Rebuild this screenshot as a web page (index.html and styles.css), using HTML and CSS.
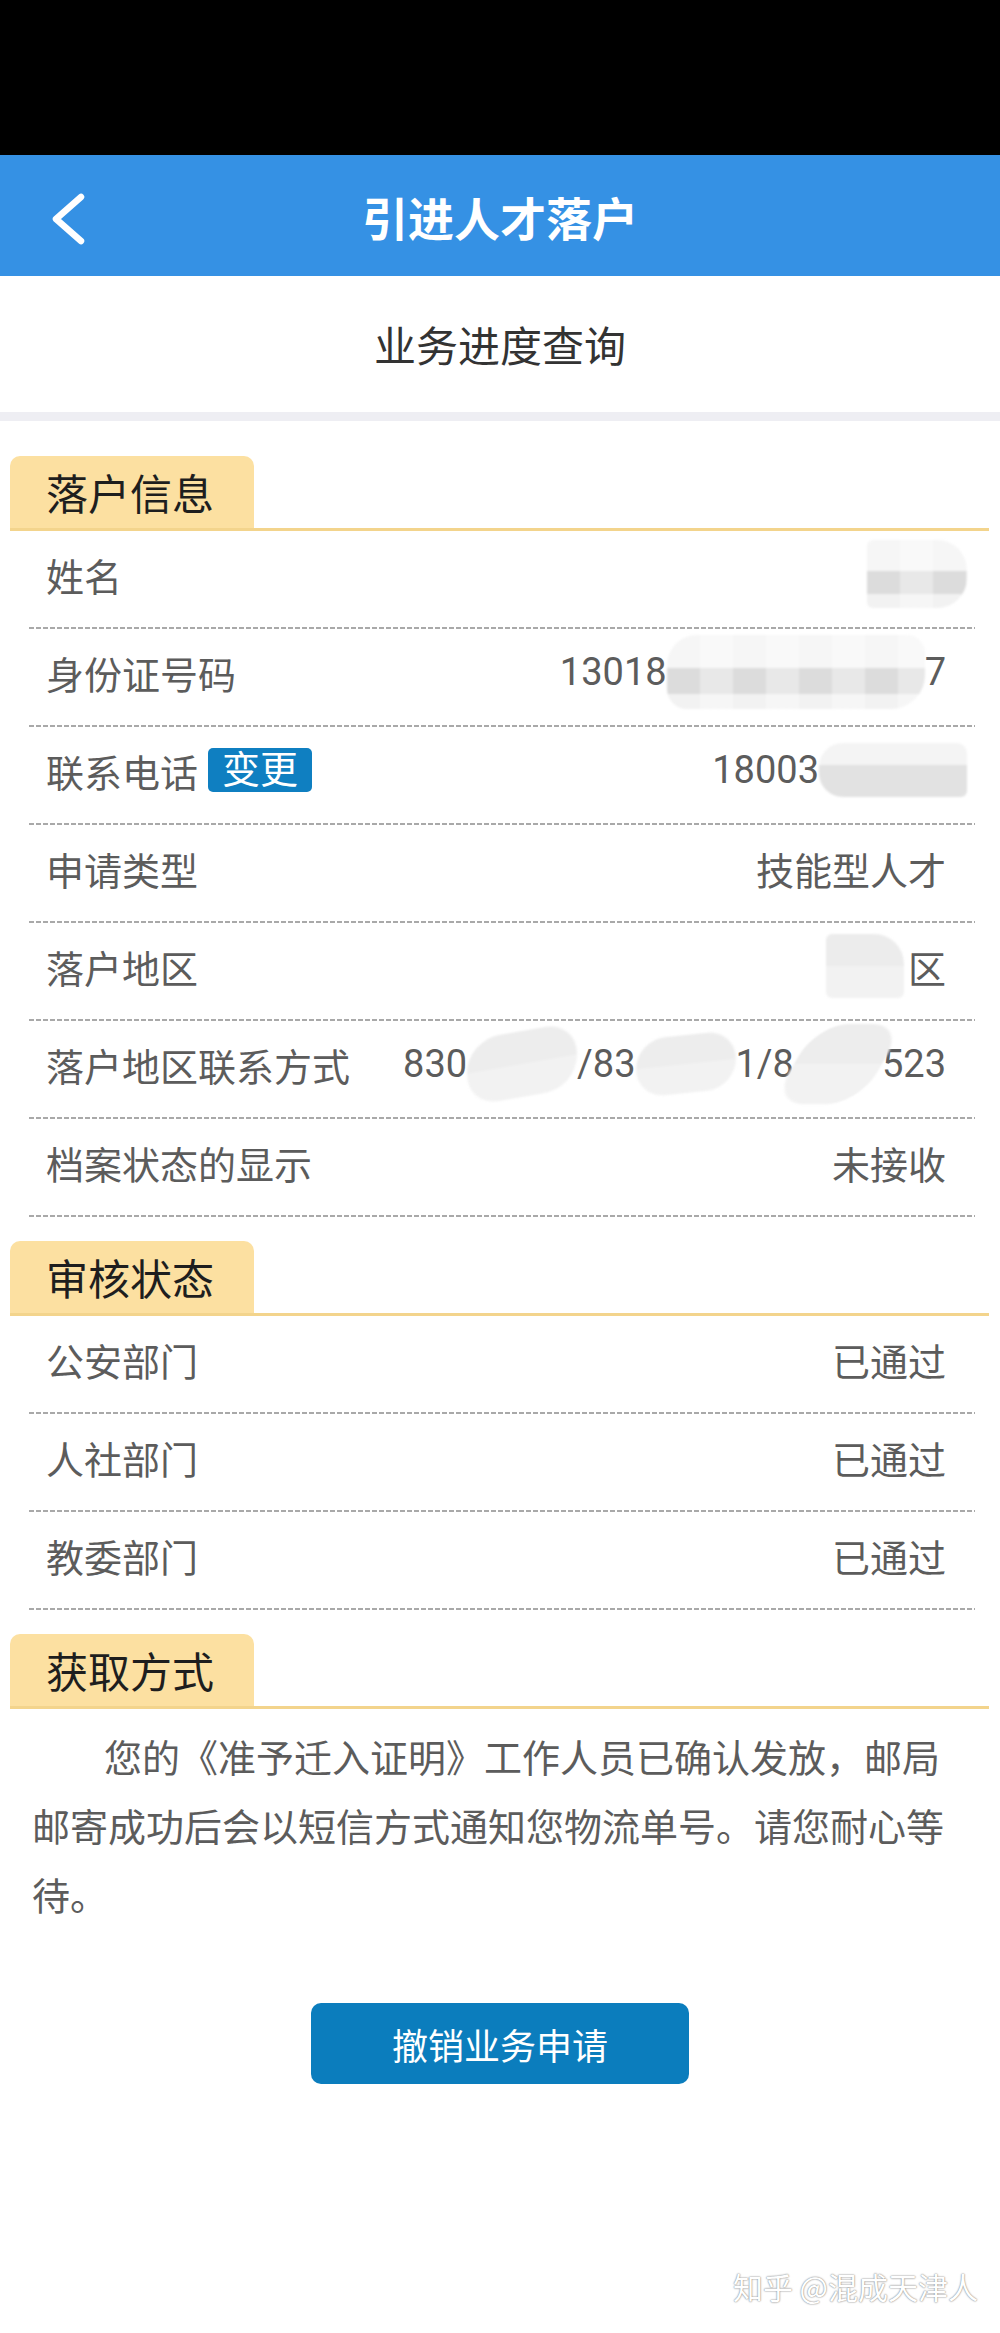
FILE: index.html
```html
<html>
<head>
  <meta charset="utf-8">
  <title>业务进度查询</title>
  <link rel="stylesheet" href="styles.css">
</head>
<body>
  <div class="page">
    <div class="statusbar"></div>

    <div class="topbar">
      <svg class="back" width="40" height="60" viewBox="0 0 40 60">
        <polyline points="35,11 10,33 35,55" fill="none" stroke="#fff" stroke-width="6.5" stroke-linecap="round" stroke-linejoin="round"/>
      </svg>
      <h1>引进人才落户</h1>
      <div></div>
    </div>

    <div class="subtitle">业务进度查询</div>

    <div class="panel">
      <div class="panel-head"><span class="tab">落户信息</span></div>
      <div class="row">
        <span class="label">姓名</span>
        <span class="value"><i class="smudge name"></i></span>
      </div>
      <div class="row">
        <span class="label">身份证号码</span>
        <span class="value">13018<i class="smudge idno"></i>7</span>
      </div>
      <div class="row">
        <span class="label">联系电话<span class="badge">变更</span></span>
        <span class="value">18003<i class="smudge phone"></i></span>
      </div>
      <div class="row">
        <span class="label">申请类型</span>
        <span class="value">技能型人才</span>
      </div>
      <div class="row">
        <span class="label">落户地区</span>
        <span class="value"><i class="smudge area"></i>区</span>
      </div>
      <div class="row">
        <span class="label">落户地区联系方式</span>
        <span class="value">830<i class="smudge tel1"></i>/83<i class="smudge tel2"></i>1/8<i class="smudge tel3"></i>523</span>
      </div>
      <div class="row">
        <span class="label">档案状态的显示</span>
        <span class="value">未接收</span>
      </div>
    </div>

    <div class="panel">
      <div class="panel-head"><span class="tab">审核状态</span></div>
      <div class="row">
        <span class="label">公安部门</span>
        <span class="value">已通过</span>
      </div>
      <div class="row">
        <span class="label">人社部门</span>
        <span class="value">已通过</span>
      </div>
      <div class="row">
        <span class="label">教委部门</span>
        <span class="value">已通过</span>
      </div>
    </div>

    <div class="panel">
      <div class="panel-head"><span class="tab">获取方式</span></div>
      <p class="notice">您的《准予迁入证明》工作人员已确认发放，邮局邮寄成功后会以短信方式通知您物流单号。请您耐心等待。</p>
    </div>

    <button class="cancel">撤销业务申请</button>

    <div class="watermark">知乎 @混成天津人</div>
  </div>
</body>
</html>
```

FILE: styles.css
```css
body {
  margin: 0;
  background: #fff;
  color: #5c5c5c;
  font-family: Roboto, "Noto Sans CJK SC", sans-serif;
}

.page {
  position: relative;
  min-height: 2333px;
}

.statusbar {
  height: 155px;
  background: #000;
}

.topbar {
  display: grid;
  grid-template-columns: 1fr auto 1fr;
  align-items: center;
  height: 121px;
  background: #3591e4;
}

.back {
  display: block;
  margin-left: 46px;
}

.topbar h1 {
  margin: 0;
  font-family: "Noto Sans CJK SC", sans-serif;
  font-size: 46px;
  font-weight: 700;
  line-height: 60px;
  color: #fff;
}

.subtitle {
  height: 136px;
  line-height: 136px;
  margin-bottom: 11px;
  text-align: center;
  font-family: "Noto Sans CJK SC", sans-serif;
  font-size: 42px;
  color: #333;
  border-bottom: 9px solid #eeeef3;
}

.panel {
  padding-top: 24px;
}

.panel-head {
  display: flex;
  margin: 0 11px 0 10px;
  border-bottom: 3px solid #f3d48c;
}

.tab {
  width: 244px;
  height: 72px;
  box-sizing: border-box;
  padding-left: 36px;
  line-height: 72px;
  background: #fce0a1;
  border-radius: 10px 10px 0 0;
  font-family: "Noto Sans CJK SC", sans-serif;
  font-size: 42px;
  color: #1e1e1e;
}

.row {
  display: flex;
  align-items: center;
  justify-content: space-between;
  height: 98px;
  box-sizing: border-box;
  padding: 0 29px 12px 17px;
  margin: 0 25px 0 29px;
  font-size: 38px;
  background: linear-gradient(to right, #a9a9a9 5px, transparent 5px) left bottom / 7px 2px repeat-x;
}

.label {
  display: flex;
  align-items: center;
  white-space: nowrap;
}

.value {
  display: flex;
  align-items: center;
  white-space: nowrap;
}

.badge {
  display: inline-block;
  margin-left: 10px;
  padding: 0 14px;
  height: 44px;
  line-height: 44px;
  border-radius: 5px;
  background: #0f7fc1;
  color: #fff;
  font-size: 38px;
}

/* blurred-out personal data */
.smudge {
  display: inline-block;
  height: 64px;
  border-radius: 22px;
  background:
    repeating-linear-gradient(to right, rgba(255,255,255,0) 0 33px, rgba(255,255,255,.35) 33px 66px),
    linear-gradient(#f6f6f6 0 45%, #dcdcdc 45% 80%, #f2f2f2 80%);
  filter: blur(1px);
}

.smudge.name {
  width: 100px;
  height: 68px;
  margin-right: -21px;
  border-radius: 6px 30px 30px 6px;
}

.smudge.idno {
  width: 258px;
  height: 74px;
  border-radius: 30px 18px 34px 20px;
}

.smudge.phone {
  width: 148px;
  height: 54px;
  margin-right: -21px;
  border-radius: 24px 10px 6px 24px;
  background: linear-gradient(#f4f4f4 0 40%, #e2e2e2 40%);
}

.smudge.area {
  width: 78px;
  height: 64px;
  margin-right: 4px;
  border-radius: 6px 30px 6px 6px;
  background: linear-gradient(#ececec 0 50%, #f2f2f2 50%);
}

.smudge.tel1,
.smudge.tel2,
.smudge.tel3 {
  height: 66px;
  border-radius: 32px;
  background: linear-gradient(#ededed 0 50%, #f2f2f2 50%);
}

.smudge.tel1 {
  width: 110px;
  transform: skewY(-10deg);
}

.smudge.tel2 {
  width: 100px;
  height: 58px;
  transform: skewY(-6deg);
}

.smudge.tel3 {
  width: 88px;
  height: 80px;
  transform: skewX(-30deg);
}

.notice {
  margin: 0;
  padding: 12px 40px 0 32px;
  font-family: "Noto Sans CJK SC", sans-serif;
  font-size: 38px;
  line-height: 69px;
  text-indent: 72px;
  color: #5c5c5c;
}

.cancel {
  display: block;
  width: 378px;
  height: 81px;
  margin: 75px auto 0;
  border: none;
  border-radius: 10px;
  background: #0b7dbd;
  color: #fff;
  font-family: "Noto Sans CJK SC", sans-serif;
  font-size: 36px;
}

.watermark {
  position: absolute;
  right: 22px;
  bottom: 29px;
  font-family: "Noto Sans CJK SC", sans-serif;
  font-size: 30px;
  line-height: 36px;
  color: #fff;
  text-shadow: 0 0 2px #888, 0 0 1px #999;
}
```
